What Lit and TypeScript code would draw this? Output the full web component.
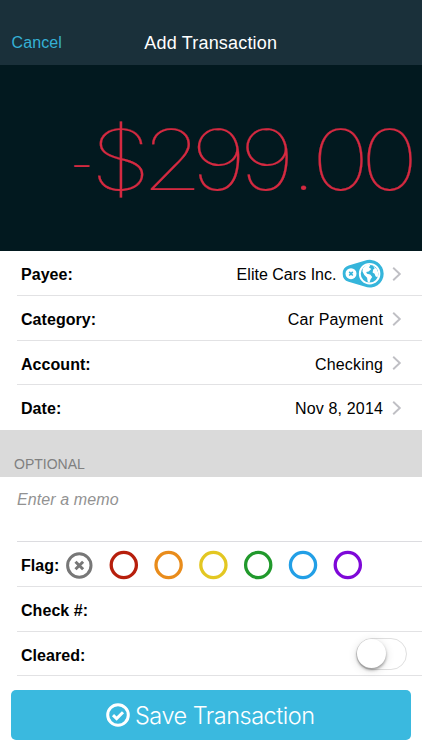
import { LitElement, html, css, svg } from "lit";
import { customElement, property } from "lit/decorators.js";

const chevron = html`<svg class="chevron" width="10" height="16" viewBox="0 0 10 16">
  <path d="M1.2 1.7 L7.8 8 L1.2 14.3" fill="none" stroke="#bfbfc4" stroke-width="1.9" />
</svg>`;

const payeeBadge = html`<svg class="badge" width="42" height="30" viewBox="0 0 42 30">
  <path d="M6.6 6.6 L22.6 1.8 A13.9 13.9 0 1 1 22.6 27.6 L6.6 22.8 A8.5 8.5 0 0 1 6.6 6.6 Z" fill="#35b5db" />
  <circle cx="9" cy="14.7" r="5.5" fill="#fff" />
  <path d="M7.2 12.9 L10.8 16.5 M10.8 12.9 L7.2 16.5" stroke="#35b5db" stroke-width="1.6" />
  <circle cx="27.6" cy="14.7" r="9.8" fill="#35b5db" stroke="#fff" stroke-width="1.9" />
  <path d="M20.8 9.2 L24.4 5.9 L28.4 6.1 L27 8.4 L29.3 10 L26.6 12.4 L24.2 13 L25 14.8 L28.2 15.6 L30.2 18 L28.5 20.5 L27.4 24 L25.6 22.4 L25.1 18.7 L22.3 16 L20.5 12.6 Z" fill="#fff" />
  <path d="M31.1 7 L34.7 10.1 L36.4 14 L35.6 18.4 L33.5 17.2 L32.6 14.7 L30.6 13.4 L31.2 10.6 L32.6 9.6 Z" fill="#fff" />
</svg>`;

@customElement("detail-row")
export class DetailRow extends LitElement {
  @property() label = "";

  static styles = css`
    :host {
      display: flex;
      box-sizing: border-box;
      height: 44.75px;
      margin-left: 17px;
      padding: 4.4px 20px 0 4px;
      align-items: center;
      border-bottom: 1.5px solid #e2e2e4;
    }
    :host([last]) {
      border-bottom-color: transparent;
    }
    .label {
      font-weight: 700;
      white-space: nowrap;
      letter-spacing: 0.05px;
    }
    .value {
      flex: 1;
      display: flex;
      align-items: center;
      justify-content: flex-end;
      letter-spacing: 0.16px;
    }
  `;

  render() {
    return html`<span class="label">${this.label}</span><span class="value"><slot></slot></span>`;
  }
}

@customElement("app-root")
export class AppRoot extends LitElement {
  static styles = css`
    :host {
      display: flex;
      flex-direction: column;
      height: 750px;
      overflow: hidden;
      background: #fff;
      color: #000;
      font: 16px/20px "Liberation Sans", Arial, sans-serif;
    }
    .bar {
      box-sizing: border-box;
      height: 65px;
      padding: 21px 12px 0 11.5px;
      display: grid;
      grid-template-columns: 1fr auto 1fr;
      align-items: center;
      background: #1a303a;
    }
    .cancel {
      color: #35b0d5;
      letter-spacing: 0.1px;
    }
    .title {
      color: #fff;
      font-size: 18px;
      letter-spacing: 0.18px;
    }
    .amount {
      height: 186px;
      background: #02191f;
    }
    .amount svg {
      display: block;
    }
    .digits {
      font-family: Inter, "Liberation Sans", sans-serif;
      font-weight: 100;
      font-size: 83.5px;
      fill: #d42a41;
      stroke: #d42a41;
      stroke-width: 0.2;
    }
    .minus {
      font-size: 44px;
      font-weight: 200;
    }
    .payee {
      letter-spacing: 0.02px;
    }
    .chevron {
      margin: -2.4px 0 0 9px;
    }
    .badge {
      margin: -3px 0 0 5px;
    }
    .badge + .chevron {
      margin-left: 8.5px;
    }
    .section {
      box-sizing: border-box;
      height: 47px;
      padding: 24px 0 0 14px;
      background: #dadada;
      color: #808080;
      font-size: 14px;
    }
    .memo {
      box-sizing: border-box;
      height: 65px;
      margin-left: 17px;
      padding-top: 13px;
      border-bottom: 1px solid #dcdce0;
      color: #929292;
      font-style: italic;
      letter-spacing: 0.1px;
    }
    .flags {
      flex: 1;
      display: block;
      margin: -2.6px 0 0 5.9px;
    }
    .toggle {
      box-sizing: border-box;
      width: 51.5px;
      height: 32px;
      margin: -3.6px -5px 0 0;
      border: 1.5px solid #dfdfdf;
      border-radius: 16px;
    }
    .knob {
      width: 29px;
      height: 29px;
      border-radius: 50%;
      background: #fff;
      box-shadow: 0 2px 3px rgba(0, 0, 0, 0.35), 0 2px 10px rgba(0, 0, 0, 0.14);
    }
    .save {
      height: 50px;
      margin: 13.5px 11px 0 10.5px;
      border-radius: 5px;
      display: flex;
      align-items: center;
      justify-content: center;
      gap: 5px;
      background: #3ab9df;
      color: #fff;
      font: 300 23.5px/30px Inter, "Liberation Sans", sans-serif;
      letter-spacing: -0.5px;
    }
    .save svg {
      margin-left: -1px;
    }
    .save span {
      padding-top: 2px;
    }
  `;

  private flags = ["#b71f0c", "#e98c1b", "#e3c722", "#21992c", "#229fe6", "#7e08d8"];

  render() {
    return html`
      <header class="bar">
        <span class="cancel">Cancel</span>
        <span class="title">Add Transaction</span>
      </header>
      <div class="amount">
        <svg width="422" height="186">
          <text class="digits" transform="scale(1.18 1)"><tspan class="minus" x="59.3" y="115.5">-</tspan><tspan y="125.3" x="76.7 120.1 161.7 202.8 246 264 305.5">$299.00</tspan></text>
        </svg>
      </div>
      <detail-row label="Payee:"><span class="payee">Elite Cars Inc.</span>${payeeBadge}${chevron}</detail-row>
      <detail-row label="Category:">Car Payment${chevron}</detail-row>
      <detail-row label="Account:">Checking${chevron}</detail-row>
      <detail-row label="Date:" last>Nov 8, 2014${chevron}</detail-row>
      <div class="section">OPTIONAL</div>
      <div class="memo">Enter a memo</div>
      <detail-row label="Flag:">
        <svg class="flags" height="32" viewBox="0 0 310 32" preserveAspectRatio="xMinYMid meet">
          <circle cx="14.3" cy="16.5" r="11.7" fill="none" stroke="#777" stroke-width="3" />
          <path d="M10.5 12.7 L18.1 20.3 M18.1 12.7 L10.5 20.3" stroke="#777" stroke-width="3" />
          ${this.flags.map(
            (c, i) => svg`<circle cx=${58.8 + i * 44.8} cy="16" r="12.6" fill="none" stroke=${c} stroke-width="3.3" />`
          )}
        </svg>
      </detail-row>
      <detail-row label="Check #:"></detail-row>
      <detail-row label="Cleared:"><div class="toggle"><div class="knob"></div></div></detail-row>
      <div class="save">
        <svg width="24" height="24" viewBox="0 0 24 24">
          <circle cx="12" cy="12" r="10.3" fill="none" stroke="#fff" stroke-width="3" />
          <path d="M7 12.2 L10.6 15.6 L17 9.2" fill="none" stroke="#fff" stroke-width="3" />
        </svg>
        <span>Save Transaction</span>
      </div>
    `;
  }
}
